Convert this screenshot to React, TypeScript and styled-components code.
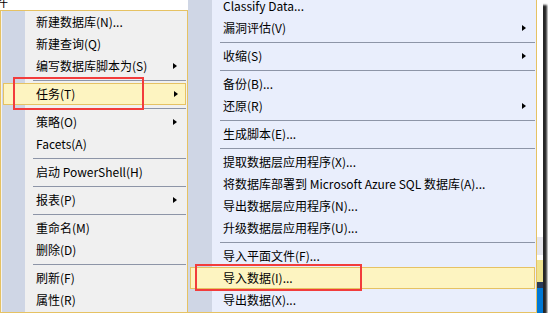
import React from 'react';
import styled, { createGlobalStyle } from 'styled-components';

const GlobalStyle = createGlobalStyle`
  html, body {
    margin: 0;
    padding: 0;
    background: #ffffff;
  }
  body {
    font-family: 'Noto Sans CJK SC', 'Noto Sans', sans-serif;
    font-size: 12px;
    color: #000;
  }
`;

const GOLD = '#e6c263';

type Item =
  | { kind: 'sep' }
  | { kind: 'item'; label: string; sub?: boolean; active?: boolean };

const sep: Item = { kind: 'sep' };
const it = (label: string, sub = false, active = false): Item => ({ kind: 'item', label, sub, active });

const leftItems: Item[] = [
  it('新建数据库(N)...'),
  it('新建查询(Q)'),
  it('编写数据库脚本为(S)', true),
  sep,
  it('任务(T)', true, true),
  sep,
  it('策略(O)', true),
  it('Facets(A)'),
  sep,
  it('启动 PowerShell(H)'),
  sep,
  it('报表(P)', true),
  sep,
  it('重命名(M)'),
  it('删除(D)'),
  sep,
  it('刷新(F)'),
  it('属性(R)'),
];

const rightItems: Item[] = [
  it('Classify Data...'),
  it('漏洞评估(V)', true),
  sep,
  it('收缩(S)', true),
  sep,
  it('备份(B)...'),
  it('还原(R)', true),
  sep,
  it('生成脚本(E)...'),
  sep,
  it('提取数据层应用程序(X)...'),
  it('将数据库部署到 Microsoft Azure SQL 数据库(A)...'),
  it('导出数据层应用程序(N)...'),
  it('升级数据层应用程序(U)...'),
  sep,
  it('导入平面文件(F)...'),
  it('导入数据(I)...', false, true),
  it('导出数据(X)...'),
];

const Frame = styled.div`
  position: relative;
  display: flex;
  width: 543px;
  height: 313px;
  background: #fff;
  overflow: hidden;
  box-shadow: 4px 5px 2px rgba(0, 0, 0, 0.85);
`;

const LeftColumn = styled.div`
  flex: 0 0 188px;
  display: flex;
  flex-direction: column;
`;

const TopStrip = styled.div`
  height: 10px;
  background: #fff;
  overflow: hidden;
  line-height: 12px;
  & > span {
    display: block;
    margin: -4px 0 0 -4px;
  }
`;

const Menu = styled.div<{ $side: 'left' | 'right' }>`
  flex: ${(p) => (p.$side === 'right' ? '0 0 349px' : '1')};
  box-sizing: border-box;
  display: flex;
  flex-direction: column;
  justify-content: ${(p) => (p.$side === 'right' ? 'flex-end' : 'flex-start')};
  border: 1px solid ${GOLD};
  border-left-width: ${(p) => (p.$side === 'right' ? '0' : '1px')};
  border-top-width: ${(p) => (p.$side === 'right' ? '0' : '1px')};
  padding-bottom: 1px;
  overflow: hidden;
  background: ${(p) =>
    p.$side === 'right'
      ? 'linear-gradient(to right, #cfd6e5 0 24px, #e9eefc 24px)'
      : 'linear-gradient(to right, #f2f2f2 0 1px, #cfd6e5 1px 24px, #f0f0f0 24px)'};
`;

const Row = styled.div<{ $active?: boolean }>`
  flex: none;
  height: 22px;
  box-sizing: border-box;
  display: flex;
  align-items: center;
  white-space: nowrap;
  padding: 0 10px 0 35px;
  ${(p) =>
    p.$active &&
    `
    margin: 0 1px 0 2px;
    padding: 0 7px 0 32px;
    background: #fdf4c1;
    border: 1px solid ${GOLD};
  `}
`;

const Label = styled.span`
  line-height: 22px;
`;

const Arrow = styled.span`
  margin-left: auto;
  width: 0;
  height: 0;
  border-left: 4px solid #000;
  border-top: 3.5px solid transparent;
  border-bottom: 3.5px solid transparent;
`;

const Separator = styled.div`
  flex: none;
  height: 6px;
  display: flex;
  align-items: center;
  padding: 0 1px 0 32px;
  &::after {
    content: '';
    flex: 1;
    height: 1px;
    background: #8d95a7;
  }
`;

const Backdrop = styled.div`
  flex: 1;
  display: flex;
  flex-direction: column;
`;

const Band = styled.div<{ $color: string; $h?: number }>`
  background: ${(p) => p.$color};
  ${(p) => (p.$h ? `height: ${p.$h}px; flex: none;` : 'flex: 1;')}
`;

const Callout = styled.div`
  position: absolute;
  box-sizing: border-box;
  border: 2px solid #f23c3c;
  pointer-events: none;
`;

const MenuList = ({ items, side }: { items: Item[]; side: 'left' | 'right' }) => (
  <Menu $side={side}>
    {items.map((item, i) =>
      item.kind === 'sep' ? (
        <Separator key={i} />
      ) : (
        <Row key={i} $active={item.active}>
          <Label>{item.label}</Label>
          {item.sub && <Arrow />}
        </Row>
      ),
    )}
  </Menu>
);

export default function App() {
  return (
    <>
      <GlobalStyle />
      <Frame>
        <LeftColumn>
          <TopStrip>
            <span>件</span>
          </TopStrip>
          <MenuList items={leftItems} side="left" />
        </LeftColumn>
        <MenuList items={rightItems} side="right" />
        <Backdrop>
          <Band $color="#ffffff" />
          <Band $color="#e6e6ec" $h={18} />
          <Band $color="#ffffff" $h={5} />
          <Band $color="#efe390" $h={22} />
          <Band $color="#2b3a57" $h={6} />
          <Band $color="#0078d4" $h={25} />
        </Backdrop>
        <Callout style={{ left: 13, top: 77, width: 131, height: 33 }} />
        <Callout style={{ left: 195, top: 264, width: 167, height: 27 }} />
      </Frame>
    </>
  );
}
